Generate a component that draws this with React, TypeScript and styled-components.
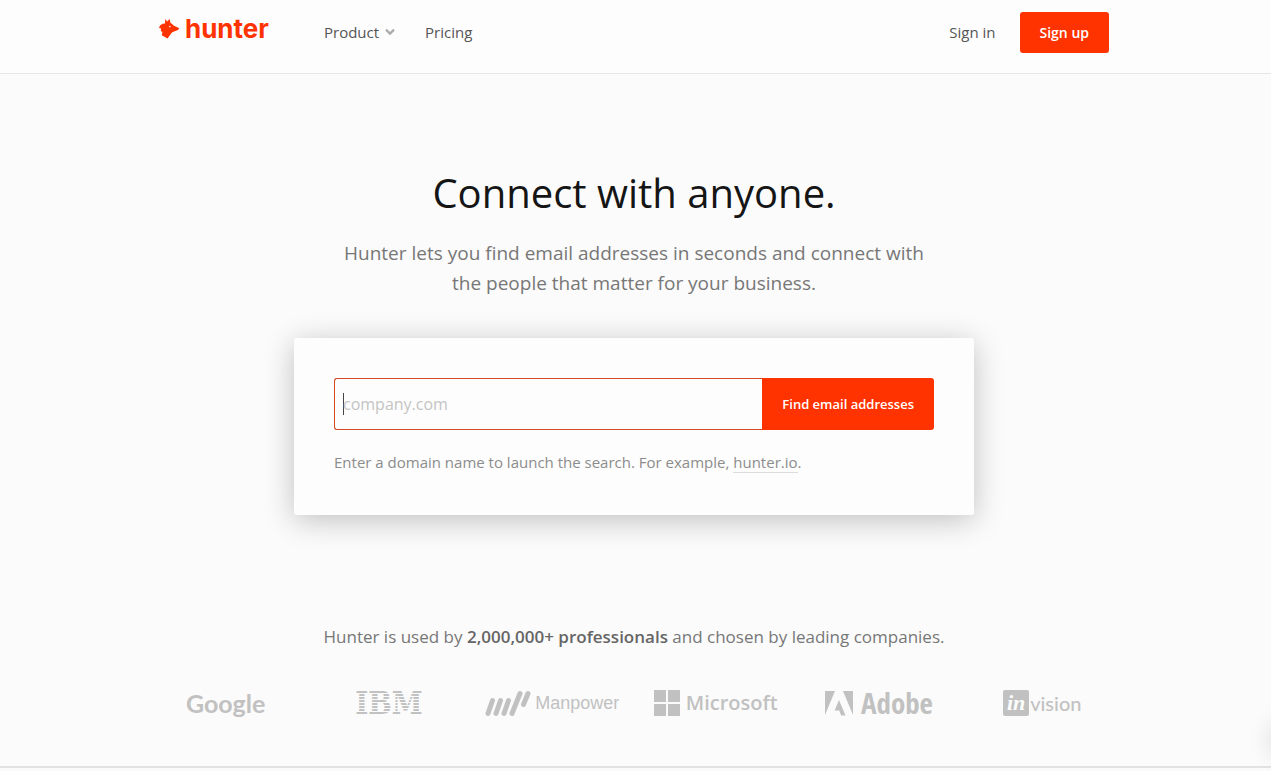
import React from "react";
import styled, { createGlobalStyle } from "styled-components";

const GlobalStyle = createGlobalStyle`
  * { box-sizing: border-box; }
  body {
    margin: 0;
    background: #fbfbfb;
    color: #666;
    font-family: "Open Sans", "Noto Sans", sans-serif;
  }
`;

const Container = styled.div`
  width: 100%;
  max-width: 950px;
  margin: 0 auto;
`;

const Header = styled.header`
  padding-right: 3px;
  background: #fdfdfd;
  border-bottom: 1px solid #e6e6e6;
`;

const HeaderRow = styled(Container)`
  display: flex;
  align-items: center;
  padding: 12px 0 20px;
`;

const Brand = styled.a`
  display: flex;
  align-items: center;
  gap: 6px;
  width: 165px;
  height: 34px;
  margin-bottom: 7px;
  color: #ff3300;
  text-decoration: none;
  font: 700 26px/34px Inter, sans-serif;
`;

const Nav = styled.nav`
  display: flex;
  align-items: center;
  gap: 30px;
`;

const NavLink = styled.a`
  display: flex;
  align-items: center;
  gap: 6px;
  padding-bottom: 2px;
  color: #555;
  font-size: 15px;
  line-height: 24px;
  text-decoration: none;
`;

const Account = styled(Nav)`
  gap: 24px;
  margin-left: auto;
`;

const Button = styled.button<{ $joined?: boolean }>`
  border: 0;
  background: #ff3300;
  color: #fff;
  font-family: inherit;
  font-weight: 600;
  cursor: pointer;
  padding: 0 20px;
  height: ${(p) => (p.$joined ? 52 : 41)}px;
  font-size: ${(p) => (p.$joined ? 13 : 14)}px;
  border-radius: ${(p) => (p.$joined ? "0 3px 3px 0" : "3px")};
`;

const Main = styled.main`
  padding: 91px 3px 48px 0;
  border-bottom: 2px solid #e2e2e2;
  text-align: center;
`;

const Title = styled.h1`
  margin: 0;
  color: #151515;
  font-size: 40px;
  font-weight: 400;
  line-height: 56px;
`;

const Lead = styled.p`
  max-width: 600px;
  margin: 17px auto 40px;
  color: #777;
  font-size: 19px;
  line-height: 30px;
`;

const Card = styled.section`
  width: 100%;
  max-width: 680px;
  margin: 0 auto;
  padding: 40px 40px 41px;
  background: #fdfdfd;
  border-radius: 3px;
  box-shadow: 0 5px 30px rgba(0, 0, 0, 0.24);
  text-align: left;
`;

const SearchForm = styled.form`
  display: flex;
`;

const DomainInput = styled.input`
  flex: 1;
  min-width: 0;
  height: 52px;
  padding: 0 8px;
  border: 1px solid #d4491f;
  border-right: 0;
  border-radius: 3px 0 0 3px;
  background: #fdfdfd;
  color: #444;
  caret-color: #333;
  font: 400 16px/24px "Open Sans", sans-serif;
  outline: 0;
  &::placeholder { color: #c4c4c4; opacity: 1; }
  &:placeholder-shown {
    caret-color: transparent;
    background: linear-gradient(#444, #444) 8px center / 1px 22px no-repeat #fdfdfd;
  }
`;

const Hint = styled.p`
  margin: 20px 0 0;
  color: #8c8c8c;
  font-size: 15px;
  line-height: 24px;
`;

const HintLink = styled.a`
  color: inherit;
  text-decoration: none;
  border-bottom: 1px solid #ddd;
`;

const Proof = styled.p`
  margin: 107px 0 36px;
  color: #777;
  font-size: 17px;
  line-height: 30px;
  strong { font-weight: 600; color: #666; }
`;

const LogoRow = styled(Container)`
  display: grid;
  grid-template-columns: repeat(6, 1fr);
  max-width: 980px;
`;

const Logo = styled.div<{ $font: string; $size: number; $weight?: number; $gap?: number }>`
  display: flex;
  align-items: center;
  justify-content: center;
  gap: ${(p) => p.$gap ?? 6}px;
  height: 30px;
  color: #c1c1c1;
  font-family: ${(p) => p.$font}, sans-serif;
  font-size: ${(p) => p.$size}px;
  font-weight: ${(p) => p.$weight ?? 400};
  line-height: 28px;
`;

const StripedLogo = styled(Logo)`
  position: relative;
  &::after {
    content: "";
    position: absolute;
    inset: 0;
    background: repeating-linear-gradient(transparent 0 2px, #fbfbfb 2px 3px);
  }
`;

const InBox = styled.span`
  display: flex;
  align-items: center;
  justify-content: center;
  width: 26px;
  height: 26px;
  border-radius: 2px;
  background: #c1c1c1;
  color: #fdfdfd;
  font: italic 700 22px/26px "Liberation Serif", serif;
`;

const EdgeShadow = styled.div`
  position: fixed;
  right: -20px;
  bottom: 16px;
  width: 20px;
  height: 30px;
  border-radius: 10px;
  box-shadow: 0 0 20px 4px rgba(0, 0, 0, 0.09);
`;

const FoxIcon = () => (
  <svg width="20" height="20" viewBox="0 0 20 20" fill="#ff3300" aria-hidden="true">
    <path d="M6.2 0 8.2 2.6 10.600 0 11.500 4c1.500.6 2.200 1.700 3.500 2.700l4.900 2.200c.2.700-.3 1.700-.9 2.100l-5.200 2c-1.700.8-2 2.600-3.400 3.900L8.500 19.500l-5.700-3.200.6-3.300L1.800 12 2 9.500 0 9l1-2.500 2.600-1.800 2.400-.2z" />
    <path d="m9.600 6.600 2.600 1.100-1.500.8z" fill="#fdfdfd" />
  </svg>
);

const Chevron = () => (
  <svg width="10" height="8" viewBox="0 0 10 8" fill="none" stroke="#aaa" strokeWidth="2.2" aria-hidden="true">
    <path d="m1 1.6 4 4 4-4" />
  </svg>
);

const ManpowerIcon = () => (
  <svg width="46" height="28" viewBox="0 0 46 28" stroke="#c1c1c1" strokeWidth="5" strokeLinecap="round" aria-hidden="true">
    <path d="m3 24.5 4.500-13M11 24.5l4.500-13M19 24.5l4.500-13M27 24.5l8-20M38.500 15.500 43 4.500" />
  </svg>
);

const MicrosoftIcon = () => (
  <svg width="26" height="26" viewBox="0 0 26 26" fill="#c1c1c1" aria-hidden="true">
    <path d="M0 0h12v12H0zM14 0h12v12H14zM0 14h12v12H0zM14 14h12v12H14z" />
  </svg>
);

const AdobeIcon = () => (
  <svg width="28" height="26" viewBox="0 0 28 26" fill="#c1c1c1" aria-hidden="true">
    <path d="M0 1h10L0 25zM18 1h10v24zM14 10l6.500 15.500h-4.300l-2-5H9.600z" />
  </svg>
);

export default function App() {
  return (
    <>
      <GlobalStyle />
      <Header>
        <HeaderRow>
          <Brand href="#"><FoxIcon />hunter</Brand>
          <Nav>
            <NavLink href="#product">Product<Chevron /></NavLink>
            <NavLink href="#pricing">Pricing</NavLink>
          </Nav>
          <Account>
            <NavLink href="#signin">Sign in</NavLink>
            <Button type="button">Sign up</Button>
          </Account>
        </HeaderRow>
      </Header>
      <Main>
        <Title>Connect with anyone.</Title>
        <Lead>Hunter lets you find email addresses in seconds and connect with the people that matter for your business.</Lead>
        <Card>
          <SearchForm onSubmit={(e) => e.preventDefault()}>
            <DomainInput aria-label="Domain name" placeholder="company.com" />
            <Button type="submit" $joined>Find email addresses</Button>
          </SearchForm>
          <Hint>
            Enter a domain name to launch the search. For example, <HintLink href="#example">hunter.io</HintLink>.
          </Hint>
        </Card>
        <Proof>
          Hunter is used by <strong>2,000,000+ professionals</strong> and chosen by leading companies.
        </Proof>
        <LogoRow>
          <Logo $font="Lato" $size={25} $weight={700}>Google</Logo>
          <StripedLogo $font='"DejaVu Serif Condensed", "DejaVu Serif"' $size={31} $weight={700}>IBM</StripedLogo>
          <Logo $font='"Liberation Sans"' $size={18} $gap={4}><ManpowerIcon />Manpower</Logo>
          <Logo $font='"Open Sans"' $size={20} $weight={600}><MicrosoftIcon />Microsoft</Logo>
          <Logo $font='"Open Sans Condensed"' $size={29} $weight={700} $gap={8}><AdobeIcon />Adobe</Logo>
          <Logo $font="Lato" $size={20} $weight={500} $gap={1}><InBox>in</InBox>vision</Logo>
        </LogoRow>
      </Main>
      <EdgeShadow />
    </>
  );
}
